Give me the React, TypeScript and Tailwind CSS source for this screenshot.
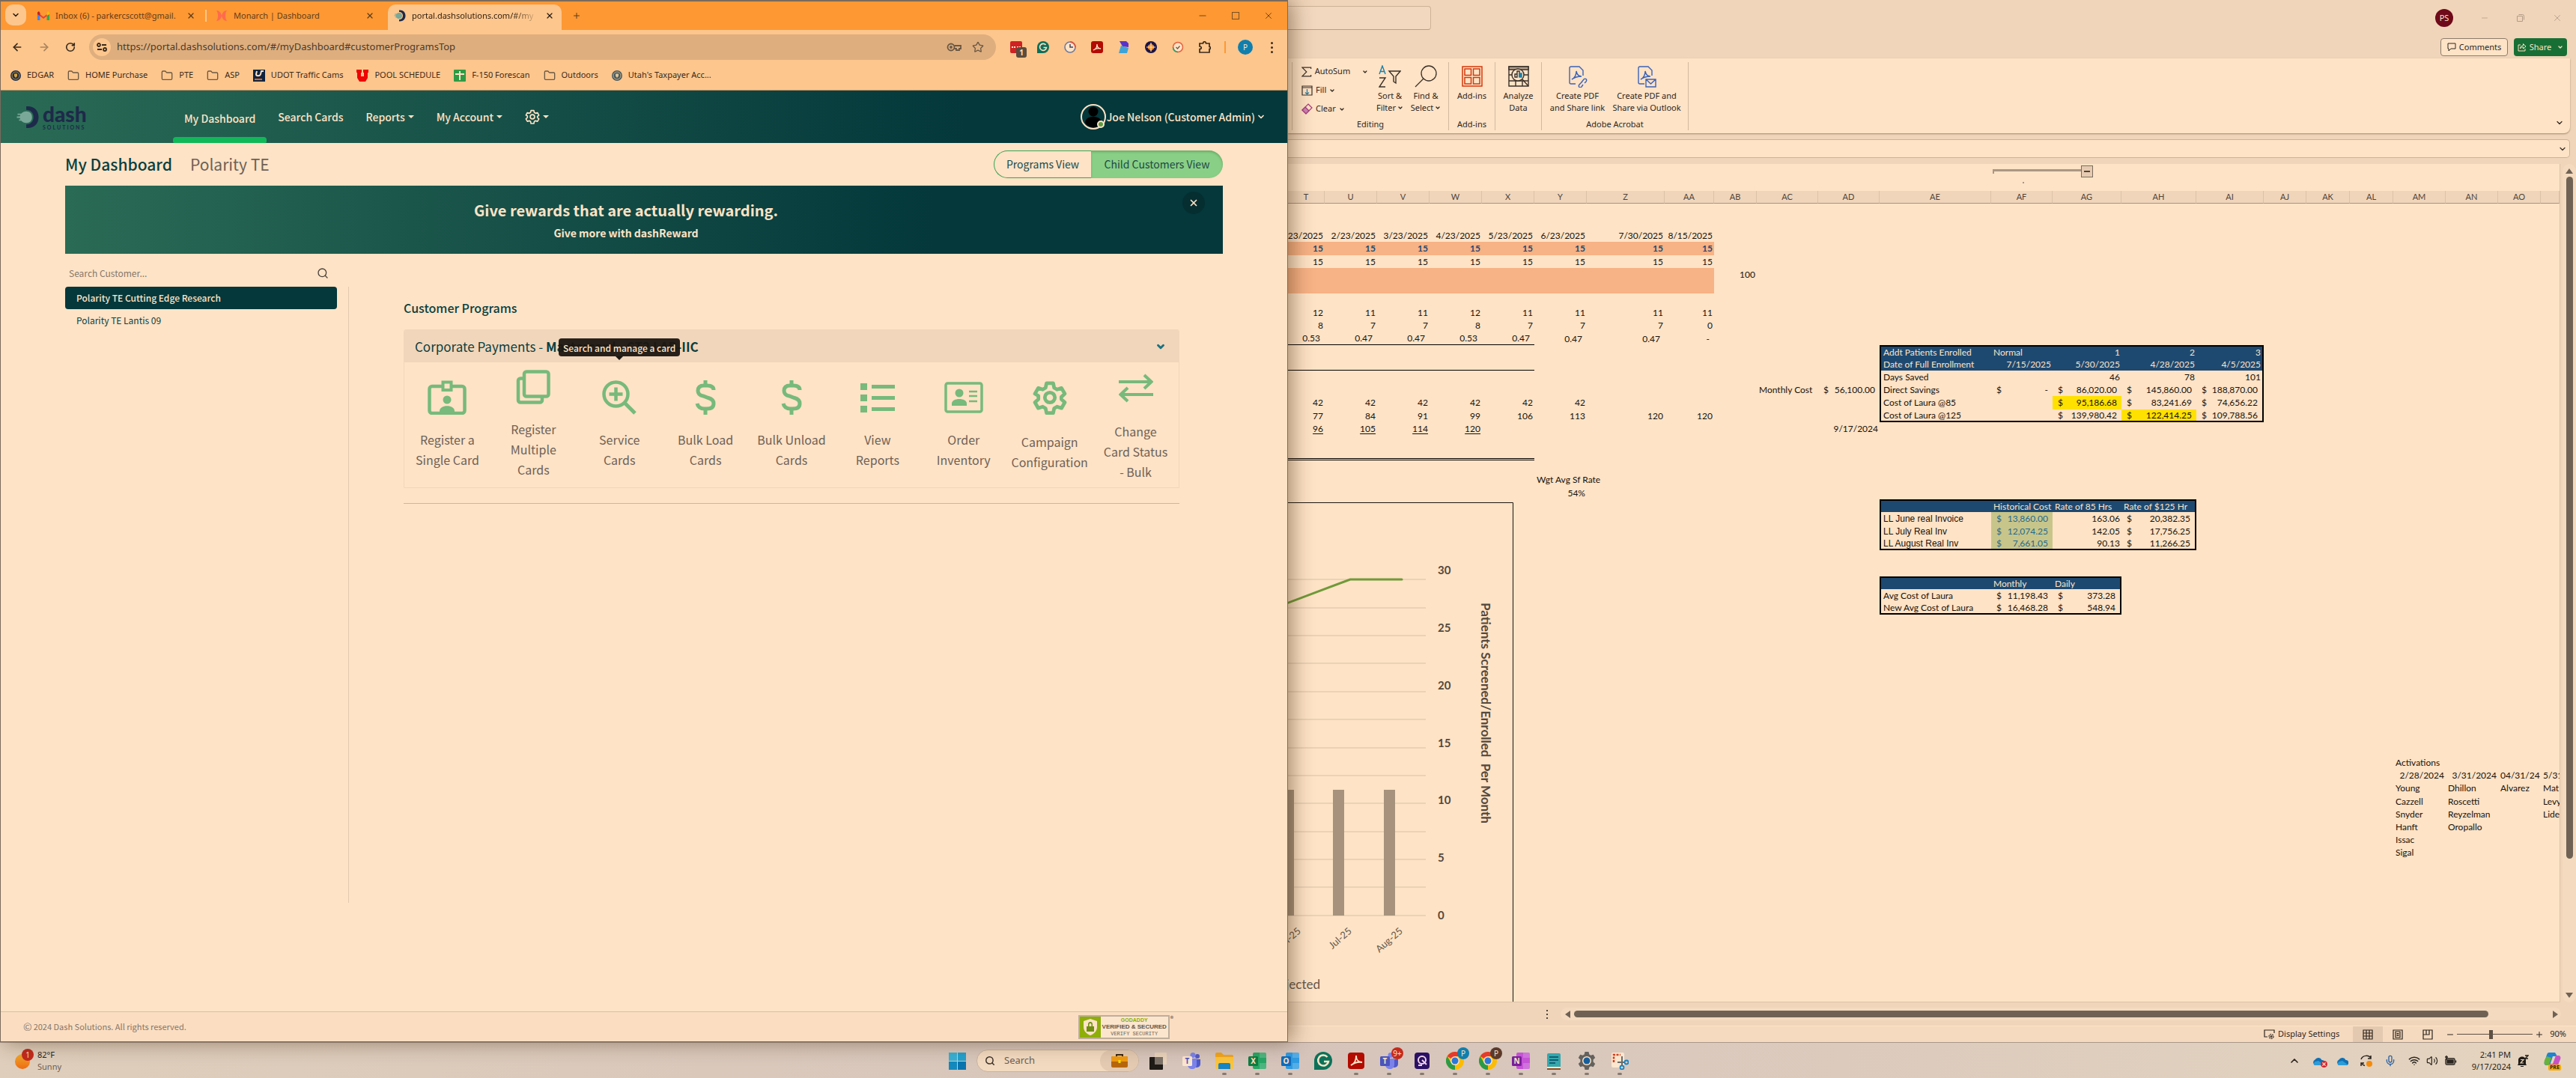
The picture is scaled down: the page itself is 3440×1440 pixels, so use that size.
import React from "react";
import {
  ArrowLeft,
  ArrowRight,
  ChevronDown,
  ChevronUp,
  Folder,
  Mic,
  Plus,
  RotateCw,
  Search,
  Star,
  Volume2,
  Wifi,
  X,
  Minus,
} from "lucide-react";

type Children = { children?: React.ReactNode };

/* ------------------------------------------------------------------ */
/* Small brand drawings                                                */
/* ------------------------------------------------------------------ */

function GmailIcon() {
  return (
    <svg viewBox="0 0 16 12" className="h-3 w-4 shrink-0" aria-hidden="true">
      <path d="M0 2v10h3.5V5z" fill="#4285f4" />
      <path d="M16 2v10h-3.500V5z" fill="#34a853" />
      <path d="M0 1.500 8 7.500 16 1.500V4L8 10 0 4z" fill="#ea4335" />
      <path d="M0 1.500 2 0l1.500 2.500V6L0 4z" fill="#c5221f" />
      <path d="M16 1.500 14 0l-1.500 2.500V6L16 4z" fill="#fbbc04" />
    </svg>
  );
}

function MonarchIcon() {
  return (
    <svg viewBox="0 0 16 16" className="h-4 w-4 shrink-0" aria-hidden="true">
      <path
        d="M1 1c4 0 6 3 7 7-1 4-3 7-7 7 2-3 2-5 2-7s0-4-2-7zM15 1c-4 0-6 3-7 7 1 4 3 7 7 7-2-3-2-5-2-7s0-4 2-7z"
        fill="#ff6a4d"
      />
    </svg>
  );
}

function DashMark({ className }: { className: string }) {
  return (
    <svg viewBox="0 0 32 30" className={className} aria-hidden="true">
      <path d="M14 0h2c9 0 15 6 15 15s-6 15-15 15h-2v-5c6 0 10-4 10-10S20 5 14 5z" fill="#1e2a4a" />
      <path
        d="M14 7c5 0 8 3 8 8s-3 8-8 8c-3 0-5-1-7-3H4v-2h2l-1-2H1v-2h4l1-2H2v-2h5c2-2 4-3 7-3z"
        fill="#7aa898"
      />
    </svg>
  );
}

function FolderIcon() {
  return <Folder className="h-4 w-4 text-[#6b5844]" strokeWidth={2} />;
}

function SealIcon({ outer, inner }: { outer: string; inner: string }) {
  return (
    <svg viewBox="0 0 14 14" className="h-[14px] w-[14px]" aria-hidden="true">
      <circle cx="7" cy="7" r="7" fill={outer} />
      <circle cx="7" cy="7" r="5" fill="none" stroke={inner} strokeWidth="0.8" />
      <path d="M5 4.500h4v3L7 10 5 7.500z" fill={inner} />
    </svg>
  );
}

/* ------------------------------------------------------------------ */
/* Browser window                                                      */
/* ------------------------------------------------------------------ */

function CloseButton({ label }: { label: string }) {
  return (
    <button type="button" aria-label={label} className="flex h-4 w-4 shrink-0 items-center justify-center">
      <X className="h-3 w-3" strokeWidth={2.5} />
    </button>
  );
}

function TabStrip() {
  return (
    <div className="flex h-[38px] items-stretch bg-[#fd9833] pl-[6px] text-[11px] text-[#5f3d1c]">
      <button
        type="button"
        aria-label="Search tabs"
        className="mt-1 flex h-7 w-7 items-center justify-center rounded-[10px] bg-[#fdc68d] text-[#2b1c0e]"
      >
        <ChevronDown className="h-3 w-3" strokeWidth={3} />
      </button>
      <div className="flex w-[241px] items-center gap-2 pl-[15px]">
        <GmailIcon />
        <span className="flex-1 whitespace-nowrap">Inbox (6) - parkercscott@gmail.</span>
        <CloseButton label="Close Inbox" />
        <span className="ml-[3px] h-4 w-[2px] bg-[#fdc68d]" />
      </div>
      <div className="flex w-[242px] items-center gap-2 pl-3">
        <MonarchIcon />
        <span className="flex-1 whitespace-nowrap">Monarch | Dashboard</span>
        <CloseButton label="Close Monarch" />
        <span className="w-2" />
      </div>
      <div className="mt-1 flex w-[232px] items-center gap-2 rounded-t-[10px] bg-[#fdc68d] px-2 pb-1 text-[#2b1c0e]">
        <DashMark className="h-4 w-4 shrink-0" />
        <span className="flex-1 whitespace-nowrap bg-gradient-to-r from-[#2b1c0e] from-80% to-[#fdc68d] bg-clip-text text-transparent">
          portal.dashsolutions.com/#/my
        </span>
        <CloseButton label="Close portal" />
      </div>
      <button type="button" aria-label="New tab" className="ml-3 flex w-4 items-center justify-center">
        <Plus className="h-3 w-3" strokeWidth={2} />
      </button>
      <div className="ml-auto flex items-center gap-8 pr-[18px]">
        <button type="button" aria-label="Minimize browser">
          <Minus className="h-[14px] w-[14px]" strokeWidth={1.5} />
        </button>
        <button type="button" aria-label="Maximize browser" className="h-[10px] w-[10px] border border-[#7a4f22]" />
        <button type="button" aria-label="Close browser">
          <X className="h-[14px] w-[14px]" strokeWidth={1.5} />
        </button>
      </div>
    </div>
  );
}

function ExtensionIcons() {
  return (
    <div className="flex items-center gap-5">
      <span className="relative h-4 w-4 rounded-[2px] bg-[#cf2222]">
        <span className="absolute inset-x-[2px] top-[7px] border-t-2 border-dotted border-[#fee3c6]" />
        <span className="absolute top-2 left-2 flex h-[14px] w-[14px] items-center justify-center rounded-[3px] bg-[#5a4c3e] text-[10px] font-bold text-[#fee3c6]">
          1
        </span>
      </span>
      <svg viewBox="0 0 16 16" className="h-4 w-4" aria-hidden="true">
        <path d="M8 0a8 8 0 1 1 0 16H0V8a8 8 0 0 1 8-8z" fill="#0f6e58" />
        <path d="M11.500 5A4.500 4.500 0 1 0 12.500 8.500H8.500" fill="none" stroke="#fee3c6" strokeWidth="1.600" />
      </svg>
      <svg viewBox="0 0 16 16" className="h-4 w-4" aria-hidden="true">
        <circle cx="8" cy="8" r="7" fill="#fee3c6" stroke="#6b7aa0" strokeWidth="1.600" />
        <path d="M8 1a7 7 0 0 1 7 7" fill="none" stroke="#d65745" strokeWidth="1.800" />
        <path d="M8 4v4h4" fill="none" stroke="#3a4560" strokeWidth="1.500" />
      </svg>
      <svg viewBox="0 0 16 16" className="h-4 w-4" aria-hidden="true">
        <rect width="16" height="16" rx="3" fill="#b30b00" />
        <path d="M3 12c3-1 5-4 5-8 0 4 2 6 5 6-4-1-7 0-10 2z" fill="none" stroke="#fee3c6" strokeWidth="1.300" />
      </svg>
      <svg viewBox="0 0 16 16" className="h-4 w-4" aria-hidden="true">
        <path d="M2 0h9l3 3v5L6 7z" fill="#5b32c8" />
        <path d="M4 6l10 3-2 7H1z" fill="#3fa3d8" />
      </svg>
      <svg viewBox="0 0 16 16" className="h-4 w-4" aria-hidden="true">
        <circle cx="8" cy="8" r="8" fill="#1b1446" />
        <path d="M8 3l4 3v4l-4 3-4-3V6z" fill="#f08c1e" />
        <path d="M8 2v12M2 8h12" stroke="#fee3c6" strokeWidth="1" />
      </svg>
      <svg viewBox="0 0 16 16" className="h-4 w-4" aria-hidden="true">
        <circle cx="8" cy="8" r="6.500" fill="#fee3c6" stroke="#e8613c" strokeWidth="1.500" />
        <path d="M1.500 8A6.500 6.500 0 0 0 8 14.500" fill="none" stroke="#31a06b" strokeWidth="1.600" />
        <path d="M5.500 8l2 2 3-3.500" fill="none" stroke="#6b5844" strokeWidth="1.300" />
      </svg>
      <svg viewBox="0 0 16 16" className="h-4 w-4" aria-hidden="true">
        <path
          d="M1 3h4.500c0-3 4-3 4 0H14v4.500c2 0 2 3 0 3V15H1v-4.500c3 0 3-3.500 0-3.500z"
          fill="none"
          stroke="#3a2a1b"
          strokeWidth="1.700"
        />
      </svg>
    </div>
  );
}

function Toolbar() {
  return (
    <div className="flex h-[46px] items-center bg-[#fdc68d] pr-[19px] pl-[14px]">
      <div className="flex items-center gap-5 pr-[18px] text-[#3a2a1b]">
        <button type="button" aria-label="Back">
          <ArrowLeft className="h-4 w-4" strokeWidth={2.5} />
        </button>
        <button type="button" aria-label="Forward" className="text-[#a9835c]">
          <ArrowRight className="h-4 w-4" strokeWidth={2.5} />
        </button>
        <button type="button" aria-label="Reload">
          <RotateCw className="h-[14px] w-[14px]" strokeWidth={2.800} />
        </button>
      </div>
      <div className="flex h-[34px] flex-1 items-center rounded-full bg-[#deae7e] pr-4 pl-[5px]">
        <button
          type="button"
          aria-label="Site information"
          className="flex h-6 w-6 items-center justify-center rounded-full bg-[#fdc68d]"
        >
          <svg viewBox="0 0 14 12" className="h-3 w-[14px]" fill="none" stroke="#3a2a1b" strokeWidth="1.800">
            <circle cx="3" cy="3" r="2" />
            <path d="M7 3h6M1 9h6" />
            <circle cx="11" cy="9" r="2" />
          </svg>
        </button>
        <input
          aria-label="Address"
          readOnly
          className="ml-2 flex-1 bg-transparent text-[13px] text-[#4c3b2a] outline-none"
          value="https://portal.dashsolutions.com/#/myDashboard#customerProgramsTop"
        />
        <div className="flex items-center gap-[14px] text-[#6b5844]">
          <svg viewBox="0 0 20 12" className="h-3 w-5" fill="none" stroke="currentColor" strokeWidth="1.800" aria-hidden="true">
            <circle cx="6" cy="6" r="4.500" />
            <circle cx="6" cy="6" r="1" fill="currentColor" />
            <path d="M10.500 4H19v4h-2v2h-4V8h-2.500" />
          </svg>
          <button type="button" aria-label="Bookmark this page">
            <Star className="h-4 w-4" strokeWidth={2} />
          </button>
        </div>
      </div>
      <div className="flex items-center pl-[19px]">
        <ExtensionIcons />
        <span className="ml-[18px] h-4 w-[2px] bg-[#fd9833]" />
        <button
          type="button"
          aria-label="Profile"
          className="ml-4 flex h-5 w-5 items-center justify-center rounded-full bg-[#0f7fae] text-[10px] text-[#fee3c6]"
        >
          P
        </button>
        <button type="button" aria-label="Browser menu" className="ml-6 flex flex-col gap-[3px]">
          <i className="h-[3px] w-[3px] rounded-full bg-[#3a2a1b]" />
          <i className="h-[3px] w-[3px] rounded-full bg-[#3a2a1b]" />
          <i className="h-[3px] w-[3px] rounded-full bg-[#3a2a1b]" />
        </button>
      </div>
    </div>
  );
}

function Bookmark({ icon, label }: { icon: React.ReactNode; label: string }) {
  return (
    <a href="#bookmark" className="flex items-center gap-2 whitespace-nowrap">
      {icon}
      {label}
    </a>
  );
}

function BookmarkBar() {
  return (
    <div className="flex h-[35px] items-center gap-[18px] border-b border-[#b98f63] bg-[#fdc68d] pb-[5px] pl-[13px] text-[11px] text-[#3a2a1b]">
      <Bookmark icon={<SealIcon outer="#20304a" inner="#d8a23a" />} label="EDGAR" />
      <Bookmark icon={<FolderIcon />} label="HOME Purchase" />
      <Bookmark icon={<FolderIcon />} label="PTE" />
      <Bookmark icon={<FolderIcon />} label="ASP" />
      <Bookmark
        icon={
          <svg viewBox="0 0 16 16" className="h-4 w-4" aria-hidden="true">
            <rect width="16" height="16" fill="#10243f" />
            <path d="M5 2L4 6c0 3 5 3 6 0l1-4h3" fill="none" stroke="#fee3c6" strokeWidth="2" />
            <path d="M2 13h10" stroke="#e2631e" strokeWidth="2" />
          </svg>
        }
        label="UDOT Traffic Cams"
      />
      <Bookmark
        icon={
          <svg viewBox="0 0 16 16" className="h-4 w-4" aria-hidden="true">
            <path d="M0 0h7v4H6v5h4V4H9V0h7v4h-1v7l-3 5H4l-3-5V4H0z" fill="#ee0505" />
          </svg>
        }
        label="POOL SCHEDULE"
      />
      <Bookmark
        icon={
          <svg viewBox="0 0 16 16" className="h-4 w-4" aria-hidden="true">
            <rect width="16" height="16" rx="1" fill="#2f9a44" />
            <path d="M8 2v12M2 6h12" stroke="#fee3c6" strokeWidth="2" />
          </svg>
        }
        label="F-150 Forescan"
      />
      <Bookmark icon={<FolderIcon />} label="Outdoors" />
      <Bookmark icon={<SealIcon outer="#4b5a5c" inner="#d9c39a" />} label="Utah's Taxpayer Acc..." />
    </div>
  );
}

function Caret() {
  return <span className="ml-1 inline-block border-x-4 border-t-4 border-x-transparent border-t-current align-middle" />;
}

function GearIcon({ className, strokeWidth }: { className: string; strokeWidth: number }) {
  return (
    <svg viewBox="0 0 24 24" className={className} fill="none" stroke="currentColor" strokeWidth={strokeWidth} strokeLinejoin="round" aria-hidden="true">
      <path d="M9.700 2h4.600l.7 3.200 2 1.200 3.100-1 2.300 4-2.400 2.200v.8 0 .8l2.400 2.200-2.300 4-3.100-1-2 1.200-.7 3.200H9.700L9 19.600l-2-1.200-3.100 1-2.300-4L4 13.200v-2.400L1.600 9.400l2.300-4 3.100 1 2-1.200z" />
      <circle cx="12" cy="12" r="3.500" />
    </svg>
  );
}

function SiteHeader() {
  return (
    <header className="flex h-[70px] items-stretch bg-gradient-to-r from-[#2a6b55] to-[#04383b] to-75% pr-[29px] pl-5 text-[14px] font-medium text-[#fee3c6]">
      <a href="#home" aria-label="dash solutions" className="flex w-[210px] items-center gap-1 font-['Lato',sans-serif] text-[#1e2a4a]">
        <DashMark className="h-[29px] w-8" />
        <span className="flex flex-col">
          <span className="text-[28px] leading-[28px] font-black">dash</span>
          <span className="text-[7px] leading-[9px] font-bold tracking-[2px]">SOLUTIONS</span>
        </span>
      </a>
      <nav className="flex items-stretch">
        <a href="#dashboard" className="flex flex-col items-center justify-end">
          <span className="px-[15px] leading-[50px]">My Dashboard</span>
          <span className="h-2 w-full rounded-t-[4px] rounded-b-[2px] bg-[#10b858]" />
        </a>
        <a href="#cards" className="flex items-center px-[15px]">Search Cards</a>
        <button type="button" className="flex items-center px-[15px]">
          Reports
          <Caret />
        </button>
        <button type="button" className="flex items-center px-[15px]">
          My Account
          <Caret />
        </button>
        <button type="button" aria-label="Settings" className="flex items-center px-[15px]">
          <GearIcon className="h-5 w-5" strokeWidth={2} />
          <Caret />
        </button>
      </nav>
      <button type="button" className="ml-auto flex items-center">
        <span className="relative h-[34px] w-[34px] rounded-full border-2 border-[#fee3c6]">
          <svg viewBox="0 0 30 30" className="h-full w-full" aria-hidden="true">
            <circle cx="15" cy="8" r="6.500" fill="#000" />
            <path d="M4 23c0-11 22-11 22 0-5 8-17 8-22 0z" fill="#000" />
          </svg>
          <span className="absolute right-0 bottom-0 h-[10px] w-[10px] rounded-full border-2 border-[#fee3c6] bg-[#5b9c43]" />
        </span>
        <span className="ml-px">Joe Nelson (Customer Admin)</span>
        <ChevronDown className="ml-[2px] h-3 w-3" strokeWidth={3.500} />
      </button>
    </header>
  );
}

/* Program action icons share one green and one 46px box. */
const actionSvg = {
  fill: "none",
  stroke: "currentColor",
  "aria-hidden": true,
} as const;

function RegisterIcon() {
  return (
    <svg viewBox="0 0 52 46" className="h-[46px] w-[52px]" {...actionSvg} strokeWidth="4.500">
      <path d="M20 8H6a3.500 3.500 0 0 0-3.500 3.500v29A3.500 3.500 0 0 0 6 44h40a3.500 3.500 0 0 0 3.500-3.500v-29A3.500 3.500 0 0 0 46 8H32" />
      <path d="M20.500 2.500h11V13h-11z" strokeWidth="4" />
      <circle cx="26" cy="26" r="5.500" fill="currentColor" stroke="none" />
      <path d="M16 44v-3c0-9 20-9 20 0v3z" fill="currentColor" stroke="none" />
    </svg>
  );
}

function CopiesIcon() {
  return (
    <svg viewBox="0 0 46 46" className="h-[46px] w-[46px]" {...actionSvg} strokeWidth="4.500">
      <rect x="11" y="2.500" width="32.500" height="33" rx="3" />
      <path d="M11 11.500H6a3 3 0 0 0-3 3v26a3 3 0 0 0 3 3h26a3 3 0 0 0 3-3v-5" />
    </svg>
  );
}

function ZoomInIcon() {
  return (
    <svg viewBox="0 0 46 46" className="h-[46px] w-[46px]" {...actionSvg} strokeWidth="4.500">
      <circle cx="18.500" cy="18.500" r="16" />
      <path d="M30 30l14 14" strokeWidth="5" />
      <path d="M18.500 9.500v18M9.500 18.500h18" />
    </svg>
  );
}

function DollarIcon() {
  return (
    <svg viewBox="0 0 46 46" className="h-[46px] w-[46px]" {...actionSvg} strokeWidth="5">
      <path d="M34 13c0-4-3-6-9-6h-4c-5 0-8 2-8 7 0 4 2 6 7 7l7 2.500c5 1.500 7 3.500 7 7.500 0 5-3 7-9 7h-3c-5 0-9-2-10-7" />
      <path d="M23 0v7M23 39v7" />
    </svg>
  );
}

function ListIcon() {
  return (
    <svg viewBox="0 0 46 46" className="h-[46px] w-[46px]" fill="currentColor" aria-hidden="true">
      <path d="M0 4h9v9H0zM15 6h31v5H15zM0 19h9v9H0zM15 21h31v5H15zM0 34h9v9H0zM15 36h31v5H15z" />
    </svg>
  );
}

function IdCardIcon() {
  return (
    <svg viewBox="0 0 52 46" className="h-[46px] w-[52px]" {...actionSvg} strokeWidth="3.500">
      <rect x="2" y="4" width="48" height="38" rx="2.500" />
      <circle cx="20" cy="17" r="5.500" fill="currentColor" stroke="none" />
      <path d="M10 34v-3c0-8 20-8 20 0v3z" fill="currentColor" stroke="none" />
      <path d="M33 15h11M33 21h11M33 28h11" strokeWidth="2.500" />
    </svg>
  );
}

function CogIcon() {
  return <GearIcon className="h-[52px] w-[46px]" strokeWidth={2.500} />;
}

function ArrowsIcon() {
  return (
    <svg viewBox="0 0 46 52" className="h-[52px] w-[46px]" {...actionSvg} strokeWidth="4">
      <path d="M0 19h43M34 10l9.500 9L34 28M46 36H3M12 27l-9.500 9L12 45" />
    </svg>
  );
}

const ACTIONS: { label: string[]; icon: React.ReactNode; tip?: string }[] = [
  { label: ["Register a", "Single Card"], icon: <RegisterIcon /> },
  { label: ["Register", "Multiple", "Cards"], icon: <CopiesIcon /> },
  { label: ["Service", "Cards"], icon: <ZoomInIcon />, tip: "Search and manage a card" },
  { label: ["Bulk Load", "Cards"], icon: <DollarIcon /> },
  { label: ["Bulk Unload", "Cards"], icon: <DollarIcon /> },
  { label: ["View", "Reports"], icon: <ListIcon /> },
  { label: ["Order", "Inventory"], icon: <IdCardIcon /> },
  { label: ["Campaign", "Configuration"], icon: <CogIcon /> },
  { label: ["Change", "Card Status", "- Bulk"], icon: <ArrowsIcon /> },
];

function ProgramPanel() {
  return (
    <section className="rounded-t-[3px] border border-[#f1d6bb]">
      <div className="flex h-[43px] items-center justify-between bg-[#f1d6bb] pr-[17px] pl-[14px] text-[17px] text-[#0b3f40]">
        <h3>
          Corporate Payments - <b>Mastercard - CT2 LAB-IIC</b>
        </h3>
        <button type="button" aria-label="Collapse program" className="text-[#1a7280]">
          <ChevronDown className="h-[14px] w-[14px]" strokeWidth={5} />
        </button>
      </div>
      <div className="grid h-[167px] grid-cols-9">
        {ACTIONS.map((a) => (
          <a
            key={a.label.join(" ")}
            href="#action"
            className="relative flex flex-col items-center justify-center gap-5 text-center text-[16px] leading-[27px] text-[#6e6157]"
          >
            {a.tip && (
              <span
                role="tooltip"
                className="absolute -top-8 z-10 flex h-6 items-center rounded-[4px] bg-[#1b1611]/95 px-[6px] text-[12px] font-medium whitespace-nowrap text-[#fee3c6]"
              >
                {a.tip}
                <i className="absolute top-full left-1/2 -ml-[5px] border-x-[5px] border-t-[5px] border-x-transparent border-t-[#1b1611]" />
              </span>
            )}
            <span className="text-[#77ba7b]">{a.icon}</span>
            <span>
              {a.label.map((line) => (
                <span key={line} className="block whitespace-nowrap">
                  {line}
                </span>
              ))}
            </span>
          </a>
        ))}
      </div>
    </section>
  );
}

function GodaddySeal() {
  return (
    <a href="#seal" className="flex items-start">
      <span className="flex h-8 w-[122px] border-2 border-[#bfae9c] bg-[#fbe6cd]">
        <span className="flex w-7 items-center justify-center bg-[#8eae08]">
          <svg viewBox="0 0 20 22" className="h-[22px] w-5" aria-hidden="true">
            <path d="M10 0l9 3v8c0 5-4 9-9 11-5-2-9-6-9-11V3z" fill="#fee3c6" />
            <path d="M5 10h10v7H5zM7 10V7c0-4 6-4 6 0v3h-1.500V7.500c0-2-3-2-3 0V10z" fill="#6f8d10" />
          </svg>
        </span>
        <span className="flex flex-1 flex-col items-center justify-center font-['Liberation_Sans']">
          <span className="text-[7px] leading-[9px] font-bold text-[#8eae08]">GODADDY</span>
          <span className="text-[8px] leading-[10px] font-bold whitespace-nowrap text-[#5d554b]">VERIFIED &amp; SECURED</span>
          <span className="font-['Liberation_Mono'] text-[7px] leading-[9px] text-[#6b6257]">VERIFY SECURITY</span>
        </span>
      </span>
      <span className="ml-px text-[9px] leading-[10px] text-[#4a4038]">®</span>
    </a>
  );
}

function DashPage() {
  return (
    <div className="flex min-h-0 flex-1 flex-col bg-[#fee3c6] font-['Noto_Sans_CJK_SC',sans-serif]">
      <SiteHeader />
      <main className="flex min-h-0 flex-1 flex-col pr-[86px] pl-[86px]">
        <div className="flex h-[57px] items-center justify-between">
          <h1 className="flex gap-6 text-[21px] font-medium text-[#0b3f40]">
            My Dashboard <span className="font-normal text-[#6e6157]">Polarity TE</span>
          </h1>
          <div className="flex h-[37px] text-[14px] text-[#1b4a48]">
            <button type="button" className="w-[130px] rounded-l-full border border-r-0 border-[#37a351]">
              Programs View
            </button>
            <button type="button" className="w-44 rounded-r-full bg-[#89cf86] shadow-[inset_0_2px_3px_rgba(40,110,50,0.35)]">
              Child Customers View
            </button>
          </div>
        </div>
        <div className="relative flex h-[91px] flex-col items-center justify-center bg-gradient-to-r from-[#2a6b55] to-[#04383b] to-75% pr-12 font-bold text-[#fee3c6]">
          <p className="text-[20px] leading-[34px]">Give rewards that are actually rewarding.</p>
          <p className="text-[14px] leading-[26px]">Give more with dashReward</p>
          <button
            type="button"
            aria-label="Dismiss banner"
            className="absolute top-2 right-6 flex h-[30px] w-[30px] items-center justify-center rounded-full bg-[#052e31]"
          >
            <X className="h-[14px] w-[14px]" strokeWidth={3} />
          </button>
        </div>
        <div className="flex min-h-0 flex-1">
          <aside className="flex w-[363px] shrink-0 flex-col text-[12px] text-[#0b3f40]">
            <label className="mt-2 flex h-9 items-center pr-[11px] pl-[5px]">
              <input
                aria-label="Search Customer"
                placeholder="Search Customer..."
                className="w-full flex-1 bg-transparent outline-none placeholder:text-[#85776a]"
              />
              <Search className="h-4 w-4 text-[#4a4038]" strokeWidth={2} />
            </label>
            <a href="#customer-1" className="flex h-[30px] items-center rounded-[4px] bg-[#04383b] pl-[15px] font-medium text-[#fee3c6]">
              Polarity TE Cutting Edge Research
            </a>
            <a href="#customer-2" className="flex h-[30px] items-center pl-[15px]">
              Polarity TE Lantis 09
            </a>
          </aside>
          <div className="mt-11 mb-[145px] ml-[15px] flex-1 border-l border-[#e3c9ae] pr-[58px] pl-[73px]">
            <h2 className="mt-4 mb-[17px] text-[16px] leading-6 font-medium text-[#0b3f40]">Customer Programs</h2>
            <ProgramPanel />
            <hr className="mt-5 border-t border-[#d0b699]" />
          </div>
        </div>
      </main>
      <footer className="flex h-10 items-center justify-between border-t border-[#d9bfa0] bg-[#fbdec2] pr-[152px] pl-[30px]">
        <span className="flex items-center gap-[2px] text-[11px] text-[#85776a]">
          <span className="text-[14px]">©</span> 2024 Dash Solutions. All rights reserved.
        </span>
        <GodaddySeal />
      </footer>
    </div>
  );
}

function BrowserWindow() {
  return (
    <section className="relative z-20 flex w-1/2 flex-col border border-t-2 border-[#7a6a5c] shadow-[6px_0_26px_rgba(60,30,0,0.45)]">
      <TabStrip />
      <Toolbar />
      <BookmarkBar />
      <DashPage />
    </section>
  );
}

/* ------------------------------------------------------------------ */
/* Spreadsheet window                                                  */
/* ------------------------------------------------------------------ */

function RibbonGroup({ label, className, children }: Children & { label: string; className: string }) {
  return (
    <div className={`flex h-[91px] flex-col border-r border-[#d3b99f] ${className}`}>
      <div className="flex flex-1">{children}</div>
      <span className="h-4 text-center leading-4">{label}</span>
    </div>
  );
}

function RibbonRow({ icon, label, arrow }: { icon: React.ReactNode; label: string; arrow?: string }) {
  return (
    <button type="button" className="flex h-[25px] items-center gap-1">
      {icon}
      {label}
      <ChevronDown className={`h-2 w-2 ${arrow ?? ""}`} strokeWidth={4} />
    </button>
  );
}

function RibbonButton({ icon, lines, arrow, className }: { icon: React.ReactNode; lines: string[]; arrow?: boolean; className: string }) {
  return (
    <button type="button" className={`flex flex-col items-center justify-start whitespace-nowrap leading-4 ${className}`}>
      <span className="flex h-[37px] items-center">{icon}</span>
      {lines.map((l, i) => (
        <span key={l} className="flex items-center gap-[2px]">
          {l}
          {arrow && i === lines.length - 1 && <ChevronDown className="h-2 w-2" strokeWidth={4} />}
        </span>
      ))}
    </button>
  );
}

function PdfIcon({ mail }: { mail?: boolean }) {
  return (
    <svg viewBox="0 0 28 30" className="h-[30px] w-7" fill="none" stroke="#3b62b8" strokeWidth="1.400" aria-hidden="true">
      <path d="M11 25H5a2 2 0 0 1-2-2V4a2 2 0 0 1 2-2h11l5 5v7" />
      <path d="M6 19c4-2 6-6 6-11 1 5 3 7 7 7-5 0-9 1-13 4z" />
      {mail ? (
        <path d="M13 19h13v10H13zM13 19l6.500 6 6.500-6" fill="#fee3c6" />
      ) : (
        <path d="M18 24l4-5c2-2 5 0 3 3l-2 2M20 22l-4 4c-2 3 1 5 3 3l2-3" />
      )}
    </svg>
  );
}

function Ribbon() {
  return (
    <div className="mr-2 flex h-[100px] rounded-br-[8px] bg-[#fee3c6] pt-[5px] pl-[5px] text-[11px] text-[#2e261f] shadow-[0_1px_2px_rgba(90,60,30,0.5)]">
      <RibbonGroup label="Editing" className="w-[210px] border-l">
        <div className="flex w-[101px] flex-col pl-3">
          <RibbonRow
            label="AutoSum"
            arrow="ml-3"
            icon={
              <svg viewBox="0 0 14 14" className="h-[14px] w-[14px]" fill="none" stroke="#3a3028" strokeWidth="1.200">
                <path d="M13 3V1H1l6 6-6 6h12v-2" />
              </svg>
            }
          />
          <RibbonRow
            label="Fill"
            icon={
              <svg viewBox="0 0 15 14" className="h-[14px] w-[15px]" fill="none" strokeWidth="1.200">
                <path d="M1 1h13v12H1zM1 3h13" stroke="#3a3028" />
                <path d="M7.500 5v7M5 9.500l2.500 2.500L10 9.500" stroke="#1a7fa8" />
              </svg>
            }
          />
          <RibbonRow
            label="Clear"
            icon={
              <svg viewBox="0 0 15 15" className="h-[15px] w-[15px]" stroke="#a33b7c" strokeWidth="1.200" aria-hidden="true">
                <path d="M9 1l5 5-8 8-5-5z" fill="none" />
                <path d="M5 5l5 5-4 4-5-5z" fill="#cd82b3" />
              </svg>
            }
          />
        </div>
        <RibbonButton
          className="w-[58px]"
          arrow
          lines={["Sort &", "Filter"]}
          icon={
            <svg viewBox="0 0 30 30" className="h-[30px] w-[30px]" fill="none" strokeWidth="1.400" aria-hidden="true">
              <path d="M1 12L5 1l4 11M2.500 8.500h5" stroke="#1a7fa8" />
              <path d="M1 17h8L1 29h8M14 8h15l-6 7v9l-3-2v-7z" stroke="#3a3028" />
            </svg>
          }
        />
        <RibbonButton
          className="w-[38px]"
          arrow
          lines={["Find &", "Select"]}
          icon={
            <svg viewBox="0 0 30 30" className="h-[30px] w-[30px]" fill="none" stroke="#3a3028" strokeWidth="1.300" aria-hidden="true">
              <circle cx="19" cy="11" r="10" />
              <path d="M12 18L1 29" />
            </svg>
          }
        />
      </RibbonGroup>
      <RibbonGroup label="Add-ins" className="w-[62px]">
        <RibbonButton
          className="w-full"
          lines={["Add-ins"]}
          icon={
            <svg viewBox="0 0 28 28" className="h-7 w-7" fill="none" stroke="#d4380d" strokeWidth="1.500" aria-hidden="true">
              <path d="M1 1h26v26H1zM4 4h8.500v8.500H4zM15.500 4H24v8.500h-8.500zM4 15.500h8.500V24H4zM15.500 15.500H24V24h-8.500z" />
            </svg>
          }
        />
      </RibbonGroup>
      <RibbonGroup label="" className="w-[62px]">
        <RibbonButton
          className="w-full"
          lines={["Analyze", "Data"]}
          icon={
            <svg viewBox="0 0 28 28" className="h-7 w-7" fill="none" stroke="#3a3028" strokeWidth="1.400" aria-hidden="true">
              <path d="M1 1h26v26H1z" />
              <path d="M1 1h26v4H1z" fill="#b3a08c" />
              <path d="M1 12h26M1 20h26M10 20v7M19 20v7" />
              <circle cx="13" cy="12" r="8" fill="#fee3c6" />
              <path d="M9 15v-4h3v4zM12 15V7h3v8" />
              <path d="M15 15v-5h3v5z" fill="#1a7fa8" stroke="#1a7fa8" />
              <path d="M19 18l8 9" />
            </svg>
          }
        />
      </RibbonGroup>
      <RibbonGroup label="Adobe Acrobat" className="w-[196px]">
        <RibbonButton className="w-[95px]" lines={["Create PDF", "and Share link"]} icon={<PdfIcon />} />
        <RibbonButton className="w-[90px]" lines={["Create PDF and", "Share via Outlook"]} icon={<PdfIcon mail />} />
      </RibbonGroup>
      <button type="button" aria-label="Collapse ribbon" className="mt-auto mr-2 mb-2 ml-auto">
        <ChevronDown className="h-3 w-3" strokeWidth={2.500} />
      </button>
    </div>
  );
}

const COLUMNS: { name: string; width: string }[] = [
  { name: "T", width: "w-[49px]" },
  { name: "U", width: "w-[70px]" },
  { name: "V", width: "w-[70px]" },
  { name: "W", width: "w-[70px]" },
  { name: "X", width: "w-[70px]" },
  { name: "Y", width: "w-[70px]" },
  { name: "Z", width: "w-[104px]" },
  { name: "AA", width: "w-[66px]" },
  { name: "AB", width: "w-[57px]" },
  { name: "AC", width: "w-[82px]" },
  { name: "AD", width: "w-[82px]" },
  { name: "AE", width: "w-[149px]" },
  { name: "AF", width: "w-[82px]" },
  { name: "AG", width: "w-[92px]" },
  { name: "AH", width: "w-[100px]" },
  { name: "AI", width: "w-[90px]" },
  { name: "AJ", width: "w-[57px]" },
  { name: "AK", width: "w-[58px]" },
  { name: "AL", width: "w-[58px]" },
  { name: "AM", width: "w-[70px]" },
  { name: "AN", width: "w-[70px]" },
  { name: "AO", width: "w-[57px]" },
  { name: "", width: "" },
];

/* A cell is its text, its alignment and any fill or border classes.
   "r" right, "l" left, "c" centre, "m" money with the sign at the left, "n" number indented at the right. */
type Cell = { text: string; kind: "r" | "l" | "c" | "m" | "n"; cls?: string };

const KIND: Record<Cell["kind"], string> = {
  r: "justify-end pr-[2px]",
  l: "justify-start pl-[3px]",
  c: "justify-center",
  m: "justify-between pl-[7px] pr-[6px]",
  n: "justify-end pr-[6px]",
};

const CELLS: Record<string, Cell> = {};

function put(row: number, from: number, kind: Cell["kind"], texts: string[], cls?: string) {
  texts.forEach((text, i) => {
    CELLS[`${row}:${from + i}`] = { text, kind, cls };
  });
}

const ORANGE = "bg-[#f7b285]";
const NAVY = "bg-[#1d4971] text-[#fee3c6]";

put(2, 0, "r", ["1/23/2025", "2/23/2025", "3/23/2025", "4/23/2025", "5/23/2025", "6/23/2025", "7/30/2025", "8/15/2025"]);
put(3, 0, "r", Array(8).fill("15"), `${ORANGE} font-bold text-[#1d4971]`);
put(4, 0, "r", Array(8).fill("15"));
put(5, 0, "r", Array(8).fill(""), ORANGE);
put(6, 0, "r", Array(8).fill(""), ORANGE);
put(5, 8, "r", ["100"]);
put(8, 0, "r", ["12", "11", "11", "12", "11", "11", "11", "11"]);
put(9, 0, "r", ["8", "7", "7", "8", "7", "7", "7", "0"]);
put(10, 0, "n", ["0.53", "0.47", "0.47", "0.53", "0.47"], "border-b border-black");
put(10, 5, "n", ["0.47", "0.47"]);
put(10, 7, "n", ["-"], "pr-5");
put(12, 0, "n", ["", "", "", "", ""], "border-b border-black");
put(14, 9, "l", ["Monthly Cost"]);
put(14, 10, "m", ["56,100.00"]);
put(15, 0, "r", ["42", "42", "42", "42", "42", "42"]);
put(16, 0, "r", ["77", "84", "91", "99", "106", "113", "120", "120"]);
put(17, 0, "r", ["96", "105", "114", "120"], "underline underline-offset-2");
put(17, 10, "r", ["9/17/2024"]);
put(19, 0, "n", ["", "", "", "", ""], "border-b-3 border-double border-black");
put(21, 5, "l", ["Wgt Avg Sf Rate"]);
put(22, 5, "r", ["54%"]);

const TL = "border-t-2 border-l-2 border-black";
const TT = "border-t-2 border-black";
const TR = "border-t-2 border-r-2 border-black";
const LL = "border-l-2 border-black";
const RR = "border-r-2 border-black";
const BL = "border-b-2 border-l-2 border-black";
const BB = "border-b-2 border-black";
const BR = "border-b-2 border-r-2 border-black";

put(11, 11, "l", ["Addt Patients Enrolled"], `${NAVY} ${TL}`);
put(11, 12, "l", ["Normal"], `${NAVY} ${TT}`);
put(11, 13, "r", ["1", "2"], `${NAVY} ${TT}`);
put(11, 15, "r", ["3"], `${NAVY} ${TR}`);
put(12, 11, "l", ["Date of Full Enrollment"], `${NAVY} ${LL}`);
put(12, 12, "r", ["7/15/2025", "5/30/2025", "4/28/2025"], NAVY);
put(12, 15, "r", ["4/5/2025"], `${NAVY} ${RR}`);
put(13, 11, "l", ["Days Saved"], LL);
put(13, 13, "r", ["46", "78"]);
put(13, 15, "r", ["101"], RR);
put(14, 11, "l", ["Direct Savings"], LL);
put(14, 12, "m", ["-", "86,020.00", "145,860.00"]);
CELLS["14:12"].cls = "pr-5";
put(14, 15, "m", ["188,870.00"], RR);
put(15, 11, "l", ["Cost of Laura @85"], LL);
put(15, 13, "m", ["95,186.68"], "bg-[#ffe100]");
put(15, 14, "m", ["83,241.69"]);
put(15, 15, "m", ["74,656.22"], RR);
put(16, 11, "l", ["Cost of Laura @125"], BL);
put(16, 12, "l", [""], BB);
put(16, 13, "m", ["139,980.42"], BB);
put(16, 14, "m", ["122,414.25"], `bg-[#ffe100] ${BB}`);
put(16, 15, "m", ["109,788.56"], BR);

const OLIVE = "bg-[#c8c58a] text-[#1f6a92]";
put(23, 11, "l", [""], `${NAVY} ${TL}`);
put(23, 12, "l", ["Historical Cost"], `${NAVY} ${TT}`);
put(23, 13, "l", ["Rate of 85 Hrs"], `${NAVY} ${TT}`);
put(23, 14, "l", ["Rate of $125 Hr"], `${NAVY} ${TR}`);
put(24, 11, "l", ["LL June real Invoice"], `${LL} font-['Liberation_Sans']`);
put(25, 11, "l", ["LL July Real Inv"], `${LL} font-['Liberation_Sans']`);
put(26, 11, "l", ["LL August Real Inv"], `${BL} font-['Liberation_Sans']`);
put(24, 12, "m", ["13,860.00"], OLIVE);
put(25, 12, "m", ["12,074.25"], OLIVE);
put(26, 12, "m", ["7,661.05"], `${OLIVE} ${BB}`);
put(24, 13, "r", ["163.06"]);
put(25, 13, "r", ["142.05"]);
put(26, 13, "r", ["90.13"], BB);
put(24, 14, "m", ["20,382.35"], RR);
put(25, 14, "m", ["17,756.25"], RR);
put(26, 14, "m", ["11,266.25"], BR);

put(29, 11, "l", [""], `${NAVY} ${TL}`);
put(29, 12, "l", ["Monthly"], `${NAVY} ${TT}`);
put(29, 13, "l", ["Daily"], `${NAVY} ${TR}`);
put(30, 11, "l", ["Avg Cost of Laura"], LL);
put(30, 12, "m", ["11,198.43"]);
put(30, 13, "m", ["373.28"], RR);
put(31, 11, "l", ["New Avg Cost of Laura"], BL);
put(31, 12, "m", ["16,468.28"], BB);
put(31, 13, "m", ["548.94"], BR);

put(43, 19, "l", ["Activations"]);
put(44, 19, "r", ["2/28/2024", "3/31/2024"]);
put(44, 21, "l", ["04/31/24", "5/31"]);
["Young", "Cazzell", "Snyder", "Hanft", "Issac", "Sigal"].forEach((t, i) => put(45 + i, 19, "l", [t]));
["Dhillon", "Roscetti", "Reyzelman", "Oropallo"].forEach((t, i) => put(45 + i, 20, "l", [t]));
put(45, 21, "l", ["Alvarez"]);
["Mat", "Levy", "Lide"].forEach((t, i) => put(45 + i, 22, "l", [t]));

const ROWS = Array.from({ length: 62 }, (_, i) => i);

function SheetTable() {
  return (
    <table className="w-full table-fixed border-separate border-spacing-0 font-['Lato',sans-serif] text-[12px] text-[#17120d]">
      <colgroup>
        {COLUMNS.map((c, i) => (
          <col key={i} className={c.width} />
        ))}
      </colgroup>
      <thead>
        <tr>
          {COLUMNS.map((c, i) => (
            <th
              key={i}
              className="h-[17px] border-r border-b border-r-[#dcc2a7] border-b-[#a8937e] bg-[#f0d5ba] p-0 text-[11px] leading-4 font-normal text-[#4f443a]"
            >
              {c.name}
            </th>
          ))}
        </tr>
      </thead>
      <tbody>
        {ROWS.map((r) => (
          <tr key={r}>
            {COLUMNS.map((_, c) => {
              const cell = CELLS[`${r}:${c}`];
              return (
                <td key={c} className="p-0">
                  <div
                    className={`flex items-center whitespace-nowrap ${r % 6 === 3 ? "h-[18px]" : "h-[17px]"} ${
                      cell ? `${KIND[cell.kind]} ${cell.cls ?? ""}` : ""
                    }`}
                  >
                    {cell?.kind === "m" && <span>$</span>}
                    {cell && <span>{cell.text}</span>}
                  </div>
                </td>
              );
            })}
          </tr>
        ))}
      </tbody>
    </table>
  );
}

const GRID_Y = [103, 141, 178, 215, 253, 290, 328, 365, 402, 440, 477, 514, 552];
const AXIS = [
  { v: "30", y: 91 },
  { v: "25", y: 168 },
  { v: "20", y: 245 },
  { v: "15", y: 322 },
  { v: "10", y: 398 },
  { v: "5", y: 475 },
  { v: "0", y: 552 },
];

function Chart() {
  return (
    <svg
      viewBox="0 0 301 668"
      className="absolute top-[452px] left-0 h-[668px] w-[301px] bg-[#fee3c6] font-['Lato',sans-serif]"
      role="img"
      aria-label="Patients screened and enrolled per month"
    >
      <path d="M0 .5h300.500V668" fill="none" stroke="#1a1510" />
      {GRID_Y.map((y) => (
        <path key={y} d={`M0 ${y}H184`} stroke="#d9c0a6" strokeWidth="1" />
      ))}
      <g fill="#a7937d">
        <rect x="-8" y="384" width="16" height="168" />
        <rect x="60" y="384" width="15" height="168" />
        <rect x="128" y="384" width="15" height="168" />
      </g>
      <path d="M-10 138L83 103H152" fill="none" stroke="#6f9a38" strokeWidth="3" strokeLinecap="round" />
      <g fill="#54483d" fontSize="15" fontWeight="bold">
        {AXIS.map((a) => (
          <text key={a.v} x="200" y={a.y + 5}>
            {a.v}
          </text>
        ))}
      </g>
      <text transform="translate(258 134) rotate(90)" fill="#54483d" fontSize="17" fontWeight="bold" xmlSpace="preserve">
        {"Patients Screened/Enrolled  Per Month"}
      </text>
      <g fill="#65584b" fontSize="13" textAnchor="end">
        <text transform="translate(18 574) rotate(-41)">Jun-25</text>
        <text transform="translate(86 574) rotate(-41)">Jul-25</text>
        <text transform="translate(154 574) rotate(-41)">Aug-25</text>
      </g>
      <text x="43" y="650" fill="#65584b" fontSize="17" textAnchor="end">
        Projected
      </text>
    </svg>
  );
}

function Sheet() {
  return (
    <div className="flex min-h-0 flex-1">
      <div className="relative flex-1 overflow-hidden border-r border-b border-[#dcc2a7] bg-[#fee3c6]">
        <div className="flex h-9 justify-start pl-[941px]">
          <div className="mt-[7px] flex h-[6px] w-[118px] border-t-[3px] border-l-2 border-[#ab9783]" />
          <button
            type="button"
            aria-label="Collapse column group"
            className="mt-[2px] flex h-4 w-4 items-center justify-center border border-[#7b6c5d] bg-[#e6cbb1]"
          >
            <i className="h-[2px] w-2 bg-[#4f443a]" />
          </button>
          <i className="absolute top-6 left-[981px] h-[2px] w-[2px] bg-[#ab9783]" />
        </div>
        <SheetTable />
        <Chart />
      </div>
      <div className="ml-[3px] flex w-[18px] flex-col items-center rounded-full bg-[#f4dabf] py-[6px]">
        <i className="border-x-[5px] border-b-[7px] border-x-transparent border-b-[#6f6254]" />
        <span className="mt-[4px] h-[911px] w-[9px] rounded-full bg-[#6f6254]" />
        <i className="mt-auto border-x-[5px] border-t-[7px] border-x-transparent border-t-[#6f6254]" />
      </div>
    </div>
  );
}

function StatusBar() {
  return (
    <div className="flex h-[22px] items-center justify-end border-t border-[#fee3c6] bg-[#f5dabf] pr-[13px] text-[11px] text-[#2e261f]">
      <button type="button" className="mr-[18px] flex items-center gap-1">
        <svg viewBox="0 0 15 14" className="h-[14px] w-[15px]" fill="none" stroke="currentColor" strokeWidth="1.200" aria-hidden="true">
          <path d="M5 10H1V1h13v4" />
          <circle cx="10" cy="9.500" r="3" strokeDasharray="2 1" />
          <circle cx="10" cy="9.500" r="1" />
        </svg>
        Display Settings
      </button>
      <button type="button" aria-label="Normal view" className="flex h-full w-10 items-center justify-center bg-[#e3c9b0]">
        <svg viewBox="0 0 14 14" className="h-[14px] w-[14px]" fill="none" stroke="currentColor" strokeWidth="1.200">
          <path d="M1 1h12v12H1zM5 1v12M9 1v12M1 5h12M1 9h12" />
        </svg>
      </button>
      <button type="button" aria-label="Page layout" className="flex h-full w-10 items-center justify-center">
        <svg viewBox="0 0 14 14" className="h-[14px] w-[14px]" fill="none" stroke="currentColor" strokeWidth="1.200">
          <path d="M1 1h12v12H1zM4 3h6v8H4zM5.500 5.500h3M5.500 7h3M5.500 8.500h3" />
        </svg>
      </button>
      <button type="button" aria-label="Page break preview" className="flex h-full w-10 items-center justify-center">
        <svg viewBox="0 0 14 14" className="h-[14px] w-[14px]" fill="none" stroke="currentColor" strokeWidth="1.200">
          <path d="M1 1h12v12H1zM5 1v6M1 7h8V1" />
        </svg>
      </button>
      <Minus className="ml-1 h-3 w-3" strokeWidth={2} />
      <input
        type="range"
        aria-label="Zoom"
        min={0}
        max={200}
        defaultValue={90}
        className="mx-[3px] h-3 w-[101px] appearance-none bg-[linear-gradient(#5d5145,#5d5145)] bg-[length:100%_1px] bg-center bg-no-repeat [&::-webkit-slider-thumb]:h-3 [&::-webkit-slider-thumb]:w-[5px] [&::-webkit-slider-thumb]:appearance-none [&::-webkit-slider-thumb]:bg-[#5d5145]"
      />
      <Plus className="h-3 w-3" strokeWidth={2} />
      <span className="ml-2">90%</span>
    </div>
  );
}

function SheetWindow() {
  return (
    <section className="flex min-w-0 flex-1 flex-col bg-[#f0d5ba]">
      <div className="flex h-12 items-center justify-between">
        <input
          aria-label="Search workbook"
          className="h-8 w-[191px] rounded-r-[4px] border border-l-0 border-[#cdb297] border-b-[#b89d83] bg-[#f2d8be] outline-none"
        />
        <div className="flex items-center gap-9 pr-[18px] text-[#b39c86]">
          <span className="flex h-6 w-6 items-center justify-center rounded-full bg-[#6e0a1a] text-[11px] text-[#fee3c6]">
            PS
          </span>
          <button type="button" aria-label="Minimize workbook">
            <Minus className="h-3 w-3" strokeWidth={1.500} />
          </button>
          <button type="button" aria-label="Restore workbook">
            <svg viewBox="0 0 12 12" className="h-3 w-3" fill="none" stroke="currentColor">
              <path d="M1.500 3.500h7v7h-7zM3.500 1.500h5a2 2 0 0 1 2 2v5" />
            </svg>
          </button>
          <button type="button" aria-label="Close workbook">
            <X className="h-[14px] w-[14px]" strokeWidth={1.500} />
          </button>
        </div>
      </div>
      <div className="flex h-[30px] items-start justify-end gap-2 pt-[3px] pr-3 text-[12px]">
        <button type="button" className="flex h-6 w-[90px] items-center justify-center gap-1 rounded-[4px] border border-[#8d7c6b] bg-[#fee3c6] text-[11px] text-[#2e261f]">
          <svg viewBox="0 0 12 12" className="h-3 w-3" fill="none" stroke="currentColor">
            <path d="M1 1h10v7H5l-3 3V8H1z" />
          </svg>
          Comments
        </button>
        <button type="button" className="flex h-6 w-[71px] items-center justify-center gap-1 rounded-[4px] bg-[#186f35] text-[11px] text-[#fee3c6]">
          <svg viewBox="0 0 12 12" className="h-3 w-3" fill="none" stroke="currentColor">
            <path d="M4 3H1v8h9V8M3.500 8c0-3 2-4 4-4V1.500L11 5 7.500 8V6c-2 0-3 0-4 2z" />
          </svg>
          Share
          <ChevronDown className="ml-1 h-2 w-2" strokeWidth={4} />
        </button>
      </div>
      <Ribbon />
      <div className="mt-2 mr-2 mb-2 flex h-[25px] items-center rounded-r-[5px] border border-l-0 border-[#cdb297] bg-[#fee3c6] pr-[3px]">
        <input aria-label="Formula bar" className="flex-1 bg-transparent outline-none" />
        <ChevronDown className="h-3 w-3 text-[#3a3028]" strokeWidth={2.500} />
      </div>
      <Sheet />
      <div className="flex h-[31px] items-center pr-5 pl-[345px]">
        <span className="flex flex-col gap-[3px]">
          <i className="h-[2px] w-[2px] bg-[#4f443a]" />
          <i className="h-[2px] w-[2px] bg-[#4f443a]" />
          <i className="h-[2px] w-[2px] bg-[#4f443a]" />
        </span>
        <div className="ml-[17px] flex h-[17px] flex-1 items-center rounded-full bg-[#f4dabf] pr-1 pl-[6px]">
          <i className="border-y-[5px] border-r-[7px] border-y-transparent border-r-[#6f6254]" />
          <span className="ml-[5px] h-[9px] flex-1 rounded-full bg-[#6f6254]" />
          <i className="ml-[86px] border-y-[5px] border-l-[7px] border-y-transparent border-l-[#6f6254]" />
        </div>
      </div>
      <StatusBar />
    </section>
  );
}

/* ------------------------------------------------------------------ */
/* Taskbar                                                             */
/* ------------------------------------------------------------------ */

function Tile({ letter, dark, light }: { letter: string; dark: string; light: string }) {
  return (
    <svg viewBox="0 0 24 24" className="h-6 w-6" aria-hidden="true">
      <rect x="6" y="1" width="18" height="22" rx="2" fill={light} />
      <path d="M15 1h7a2 2 0 0 1 2 2v5h-9zM15 15h9v6a2 2 0 0 1-2 2h-7z" fill="#fff" fillOpacity="0.18" />
      <rect x="0" y="6" width="13" height="13" rx="1.500" fill={dark} />
      <text x="6.500" y="16" fontSize="10" fontWeight="bold" fill="#fee3c6" textAnchor="middle">
        {letter}
      </text>
    </svg>
  );
}

function TeamsIcon({ light }: { light?: boolean }) {
  return (
    <svg viewBox="0 0 24 24" className="h-6 w-6" aria-hidden="true">
      <circle cx="20" cy="6" r="3" fill="#5059c9" />
      <path d="M16 10h8v6c0 4-3 5-6 5z" fill="#5059c9" />
      <circle cx="14" cy="4.500" r="3.500" fill="#7b83eb" />
      <path d="M7 9h12v8c0 8-12 8-12 0z" fill="#7b83eb" />
      <rect x="0" y="6" width="13" height="13" rx="1.500" fill={light ? "#fbe6cf" : "#4b53bc"} />
      <text x="6.500" y="16" fontSize="10" fontWeight="bold" fill={light ? "#4b53bc" : "#fee3c6"} textAnchor="middle">
        T
      </text>
    </svg>
  );
}

function ChromeIcon() {
  return (
    <svg viewBox="0 0 24 24" className="h-6 w-6" aria-hidden="true">
      <circle cx="12" cy="12" r="12" fill="#fbbc04" />
      <path d="M12 12L1.600 6A12 12 0 0 1 22.400 6H12z" fill="#e33b2e" />
      <path d="M12 12v12A12 12 0 0 1 1.600 6L7 15z" fill="#2b9a48" />
      <circle cx="12" cy="12" r="6" fill="#fee3c6" />
      <circle cx="12" cy="12" r="4.500" fill="#2b78d8" />
    </svg>
  );
}

type App = { name: string; icon: React.ReactNode; open?: boolean; badge?: string; badgeCls?: string };

const APPS: App[] = [
  {
    name: "Task view",
    icon: (
      <svg viewBox="0 0 24 24" className="h-6 w-6" aria-hidden="true">
        <rect x="0" y="7" width="18" height="17" rx="1" fill="#1f1b17" />
        <rect x="7" y="1" width="16" height="16" rx="1" fill="#e9d3bb" />
        <path d="M7 7h11v10H7z" fill="#7d7368" />
      </svg>
    ),
  },
  { name: "Teams", icon: <TeamsIcon light /> },
  {
    name: "File Explorer",
    open: true,
    icon: (
      <svg viewBox="0 0 24 24" className="h-6 w-6" aria-hidden="true">
        <path d="M0 3a2 2 0 0 1 2-2h6l3 3h11a2 2 0 0 1 2 2v15H0z" fill="#f0a51e" />
        <path d="M0 7h24v14a2 2 0 0 1-2 2H2a2 2 0 0 1-2-2z" fill="#fbc43c" />
        <path d="M4 23v-6a2 2 0 0 1 2-2h12a2 2 0 0 1 2 2v6z" fill="#1784c4" />
      </svg>
    ),
  },
  { name: "Excel", open: true, icon: <Tile letter="X" dark="#107c41" light="#27a765" /> },
  { name: "Outlook", open: true, icon: <Tile letter="O" dark="#0f6cbd" light="#2f9be0" /> },
  {
    name: "Grammarly",
    icon: (
      <svg viewBox="0 0 24 24" className="h-6 w-6" aria-hidden="true">
        <path d="M12 0a12 12 0 1 1 0 24H0V12A12 12 0 0 1 12 0z" fill="#0b7259" />
        <path d="M17.500 7A7 7 0 1 0 19 13h-6" fill="none" stroke="#fee3c6" strokeWidth="2.500" />
      </svg>
    ),
  },
  {
    name: "Acrobat",
    open: true,
    icon: (
      <svg viewBox="0 0 24 24" className="h-6 w-6" aria-hidden="true">
        <rect x="1" y="1" width="22" height="22" rx="4" fill="#b30b00" />
        <path d="M5 18c5-2 7-7 7-13 0 6 3 9 8 9-6-1-11 1-15 4z" fill="none" stroke="#fee3c6" strokeWidth="1.800" />
      </svg>
    ),
  },
  { name: "Teams (work)", open: true, icon: <TeamsIcon />, badge: "9+", badgeCls: "bg-[#c32a1c]" },
  {
    name: "Assistant",
    open: true,
    icon: (
      <svg viewBox="0 0 24 24" className="h-6 w-6" aria-hidden="true">
        <rect x="2" y="1" width="20" height="22" rx="4" fill="#2b1165" />
        <circle cx="12" cy="11" r="5" fill="none" stroke="#f0d5ea" strokeWidth="2" />
        <path d="M12 11l6 6M7 18h5" stroke="#f0d5ea" strokeWidth="2" />
      </svg>
    ),
  },
  { name: "Chrome", open: true, icon: <ChromeIcon />, badge: "P", badgeCls: "bg-[#0f7fae]" },
  { name: "Chrome (second profile)", open: true, icon: <ChromeIcon />, badge: "P", badgeCls: "bg-[#5b3a2c]" },
  { name: "OneNote", open: true, icon: <Tile letter="N" dark="#7b1f9a" light="#c653d6" /> },
  {
    name: "Notepad",
    open: true,
    icon: (
      <svg viewBox="0 0 24 24" className="h-6 w-6" aria-hidden="true">
        <rect x="3" y="2" width="18" height="20" rx="2" fill="#35a7ad" />
        <path d="M6 7h12M6 11h12M6 15h8" stroke="#0f5f73" strokeWidth="1.800" />
        <path d="M3 20h18v2H3z" fill="#fee3c6" />
        <path d="M3 22h18v2H3z" fill="#8a4b20" />
      </svg>
    ),
  },
  {
    name: "Settings",
    open: true,
    icon: (
      <svg viewBox="0 0 24 24" className="h-6 w-6" aria-hidden="true">
        <path
          d="M9.500 0h5l.8 3.500 2 1.200 3.400-1 2.500 4.300-2.600 2.400v3.200l2.600 2.400-2.500 4.300-3.400-1-2 1.200-.8 3.500h-5l-.8-3.500-2-1.200-3.400 1L.8 16l2.600-2.400v-3.200L.8 8l2.500-4.300 3.400 1 2-1.200z"
          fill="#63615d"
        />
        <circle cx="12" cy="12" r="6" fill="#fee3c6" />
        <circle cx="12" cy="12" r="4.500" fill="#175f9c" />
      </svg>
    ),
  },
  {
    name: "Snipping Tool",
    open: true,
    icon: (
      <svg viewBox="0 0 24 24" className="h-6 w-6" aria-hidden="true">
        <rect x="1" y="1" width="17" height="20" rx="2" fill="#fbe6cf" />
        <path d="M4 14V4h9" fill="none" stroke="#d63e1c" strokeWidth="2.500" strokeDasharray="3 1.500" />
        <path d="M15 6v12M9 14h10" stroke="#6b6b6b" strokeWidth="2" />
        <circle cx="21" cy="14" r="2.500" fill="none" stroke="#1784c4" strokeWidth="1.800" />
        <circle cx="15" cy="21" r="2.500" fill="none" stroke="#1784c4" strokeWidth="1.800" />
      </svg>
    ),
  },
];

function TaskbarApp({ app }: { app: App }) {
  return (
    <button type="button" aria-label={app.name} className="relative flex h-12 w-11 items-center justify-center">
      {app.icon}
      {app.badge && (
        <span
          className={`absolute top-[6px] right-[3px] flex h-4 w-4 items-center justify-center rounded-full text-[10px] text-[#fee3c6] ${app.badgeCls}`}
        >
          {app.badge}
        </span>
      )}
      {app.open && <i className="absolute bottom-[5px] h-[3px] w-[6px] rounded-full bg-[#857a70]" />}
    </button>
  );
}

function Cloud({ error }: { error?: boolean }) {
  return (
    <span className="relative">
      <svg viewBox="0 0 16 12" className="h-3 w-4" aria-hidden="true">
        <path d="M4 12a4 4 0 0 1-.5-7.500A5 5 0 0 1 12.500 5 3.500 3.500 0 0 1 13 12z" fill="#0f6fb4" />
        <path d="M3 12a3 3 0 0 1 1-5l4-1 7 5a3 3 0 0 1-2 1z" fill="#2c9cd6" />
      </svg>
      {error && (
        <span className="absolute -right-1 -bottom-[3px] flex h-[9px] w-[9px] items-center justify-center rounded-full bg-[#cf2430] text-[#fee3c6]">
          <X className="h-[7px] w-[7px]" strokeWidth={4} />
        </span>
      )}
    </span>
  );
}

function Taskbar() {
  return (
    <footer className="grid h-12 shrink-0 grid-cols-[1fr_auto_1fr] items-center border-t border-[#a8978a] bg-gradient-to-r from-[#dfcebb] via-[#d6c4bb] to-[#e4d4bf]">
      <div className="flex items-center gap-2 pl-5 text-[11px] leading-4">
        <span className="relative h-[22px] w-[22px]">
          <span className="absolute bottom-0 left-0 h-5 w-5 rounded-full bg-gradient-to-b from-[#f0aa2c] to-[#ee6a10]" />
          <span className="absolute -top-[5px] left-[9px] flex h-4 w-4 items-center justify-center rounded-full bg-[#c32a1c] text-[10px] text-[#fee3c6]">
            1
          </span>
        </span>
        <span className="flex flex-col text-[#2a241e]">
          82°F
          <span className="text-[#6b6055]">Sunny</span>
        </span>
      </div>
      <div className="flex items-center pl-3">
        <button type="button" aria-label="Start" className="mr-[14px] grid h-[23px] w-[23px] grid-cols-2 gap-px">
          <i className="bg-[#38b0d4]" />
          <i className="bg-[#23a0cd]" />
          <i className="bg-[#1489bd]" />
          <i className="bg-[#0a74ad]" />
        </button>
        <label className="mr-1 flex h-[30px] w-[217px] items-center gap-3 rounded-full border border-[#c8b39f] bg-[#f2dac0] pl-[10px]">
          <Search className="h-[14px] w-[14px] text-[#3a3028]" strokeWidth={2.500} />
          <input
            aria-label="Search"
            placeholder="Search"
            className="w-0 flex-1 bg-transparent text-[13px] outline-none placeholder:text-[#6b6055]"
          />
          <span className="flex h-7 w-[51px] items-center justify-center rounded-full bg-[#e3cab1]">
            <svg viewBox="0 0 22 18" className="h-[18px] w-[22px]" aria-hidden="true">
              <path d="M7 4V1h8v3" fill="none" stroke="#3a2a1b" strokeWidth="2" />
              <rect y="3" width="22" height="15" rx="2" fill="#b8660d" />
              <path d="M0 5a2 2 0 0 1 2-2h18a2 2 0 0 1 2 2v5H0z" fill="#f09a12" />
              <rect x="9.500" y="8" width="3" height="4" fill="#ffe100" />
            </svg>
          </span>
        </label>
        {APPS.map((a) => (
          <TaskbarApp key={a.name} app={a} />
        ))}
      </div>
      <div className="flex items-center justify-end gap-4 pr-5 text-[11px] leading-4 text-[#2a241e]">
        <ChevronUp className="h-4 w-4" strokeWidth={2.500} />
        <Cloud error />
        <Cloud />
        <svg viewBox="0 0 16 16" className="h-4 w-4" fill="none" stroke="currentColor" strokeWidth="1.500" aria-hidden="true">
          <path d="M1 6c2-6 11-6 13-1M14 1v4h-4M1 15v-4h4M2 12c1 1 2 2 4 2.500" />
          <circle cx="12" cy="12" r="4" fill="#f58a0a" stroke="none" />
        </svg>
        <Mic className="h-4 w-4 text-[#2b62a4]" strokeWidth={2} />
        <span className="mr-1 flex items-center gap-2">
          <Wifi className="h-4 w-4" strokeWidth={2.200} />
          <Volume2 className="h-4 w-4" strokeWidth={1.800} />
          <svg viewBox="0 0 17 14" className="h-[14px] w-[17px]" fill="none" stroke="currentColor" strokeWidth="1.400" aria-hidden="true">
            <rect x="2" y="4" width="12" height="8" rx="1.500" />
            <rect x="4" y="6" width="8" height="4" fill="currentColor" />
            <path d="M15.500 6.500v3M3 0v6M1 2h4" />
          </svg>
        </span>
        <span className="flex flex-col text-right">
          <span>2:41 PM</span>
          <span>9/17/2024</span>
        </span>
        <svg viewBox="0 0 16 16" className="-ml-2 h-4 w-4" aria-hidden="true">
          <path d="M2 12V7c0-6 10-6 10 0v5l1 2H1zM5 15h4v1H5z" fill="#1f1b17" />
          <path d="M5 6.500h4l-4 4.500h4" fill="none" stroke="#e9d3bb" strokeWidth="1.200" />
          <path d="M11 1h4l-4 4h4" fill="none" stroke="#1f1b17" strokeWidth="1.300" />
        </svg>
        <span className="relative ml-1 h-6 w-[23px]">
          <svg viewBox="0 0 23 22" className="h-[22px] w-[23px]" aria-hidden="true">
            <path d="M7 1h8l3 5h-6L8 18H4c-3 0-4-2-3-5L4 4c.5-2 1.500-3 3-3z" fill="#1f83cf" />
            <path d="M1 11l3-5 6 2-3 10H4c-3 0-4-3-3-7z" fill="#67b23c" />
            <path d="M16 20H9l-2-4h5l4-11h3c3 0 4 2 3 5l-3 8c-.5 1.500-1.500 2-3 2z" fill="#c653c6" />
          </svg>
          <span className="absolute -bottom-px left-[6px] rounded-[2px] bg-[#f9ab06] px-[2px] text-[7px] leading-[8px] font-bold text-[#2a241e]">
            PRE
          </span>
        </span>
      </div>
    </footer>
  );
}

export default function App() {
  return (
    <div className="flex h-screen flex-col overflow-hidden bg-[#f0d5ba] font-['Noto_Sans',sans-serif]">
      <div className="flex min-h-0 flex-1">
        <BrowserWindow />
        <SheetWindow />
      </div>
      <Taskbar />
    </div>
  );
}
